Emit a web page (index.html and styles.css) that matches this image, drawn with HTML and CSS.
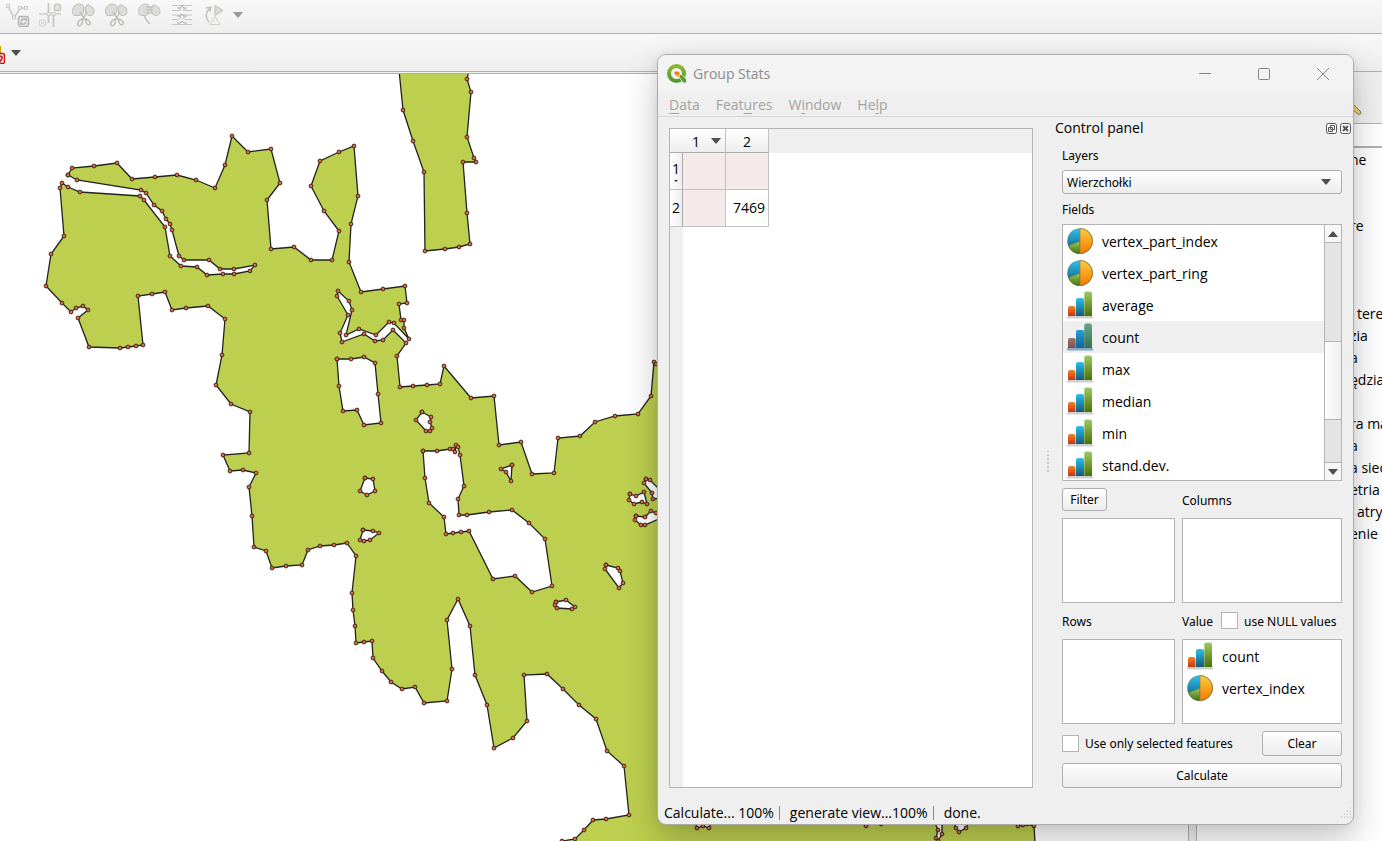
FILE: index.html
```html
<!DOCTYPE html>
<html lang="en">
<head>
<meta charset="utf-8">
<title>Group Stats</title>
<link rel="stylesheet" href="styles.css">
</head>
<body>
<svg class="defs" aria-hidden="true">
  <defs>
    <linearGradient id="gOrange" x1="0" y1="0" x2="0" y2="1"><stop offset="0" stop-color="#fccf3e"/><stop offset="1" stop-color="#f57900"/></linearGradient>
    <linearGradient id="gBlue" x1="0" y1="0" x2="0" y2="1"><stop offset="0" stop-color="#2fbfee"/><stop offset="1" stop-color="#0f5a7c"/></linearGradient>
    <linearGradient id="gPie" x1="0" y1="0" x2="0" y2="1"><stop offset="0" stop-color="#2fc2f0"/><stop offset=".7" stop-color="#16749c"/></linearGradient>
    <linearGradient id="gGreen" x1="0" y1="0" x2="0" y2="1"><stop offset="0" stop-color="#9aca60"/><stop offset="1" stop-color="#467208"/></linearGradient>
    <linearGradient id="gRed" x1="0" y1="0" x2="0" y2="1"><stop offset="0" stop-color="#f58220"/><stop offset="1" stop-color="#c23616"/></linearGradient>
    <linearGradient id="gQ" x1="0" y1="0" x2="0" y2="1"><stop offset="0" stop-color="#8fb52c"/><stop offset="1" stop-color="#4f9a2f"/></linearGradient>
    <symbol id="pie" viewBox="0 0 26 26">
      <circle cx="13" cy="13" r="12.6" fill="url(#gPie)"/>
      <path d="M13 13L1.3 17.4A12.6 12.6 0 0 0 13 25.6z" fill="url(#gGreen)" stroke="#3c7050" stroke-width=".6"/>
      <path d="M13 .4A12.6 12.6 0 0 1 13 25.6z" fill="url(#gOrange)" stroke="#a07840" stroke-width=".7"/>
      <circle cx="13" cy="13" r="12.5" fill="none" stroke="#7a6a30" stroke-opacity=".5" stroke-width=".7"/>
    </symbol>
    <symbol id="bars" viewBox="0 0 26 28">
      <rect x="0" y="25" width="26" height="2.6" rx="1" fill="#cfcfd2"/>
      <path d="M1 25V17q0-2 2-2h3.500q2 0 2 2v8z" fill="url(#gRed)"/>
      <path d="M9 25V9q0-2 2-2h4q2 0 2 2v16z" fill="url(#gBlue)"/>
      <path d="M17.300 25V2.500q0-2 2-2h3.700q2 0 2 2V25z" fill="url(#gGreen)"/>
    </symbol>
    <symbol id="bars-on" viewBox="0 0 26 28">
      <use href="#bars"/>
      <path d="M0 25h1V17q0-2 2-2h3.500q1.500 0 2.500 1V9q0-2 2-2h4q1.500 0 2.300 1V2.500q0-2 2-2h3.700q2 0 2 2V25h1v2.600H0z" fill="#1a70c0" fill-opacity=".4"/>
    </symbol>
    <symbol id="down" viewBox="0 0 10 6"><path d="M0 0h10L5.500 5.500h-1z" fill="currentColor"/></symbol>
    <marker id="vertex" viewBox="0 0 6 6" refX="3" refY="3" markerWidth="6" markerHeight="6" markerUnits="userSpaceOnUse"><circle cx="3" cy="3" r="1.900" fill="#ea6a40" stroke="#3a2a20" stroke-width="1"/></marker>
    <g id="petals"><path d="M0 8Q1 2 7 1q5 0 5 5 0 7-7 6.500Q0 13 0 8z"/><path d="M13 5q1-4 4-3l1 1q4 1 4 5 0 5-5 4.500-4-1-4-7.500z"/></g>
    <g id="blades"><path d="M8 9l5.500 8M15 9l-4.500 8M10.500 16q-4 1-5 5 1 3 3.500 1 2-2 1.500-6zM13.500 16q4 1 5 4-1 3-3.500 1-2-2-1.500-5z"/></g>
  </defs>
</svg>

<div class="app">
  <header class="toolbar toolbar-edit">
    <button class="tool" aria-label="Offset curve"><svg viewBox="0 0 24 24" fill="none" stroke="#c8c8c4"><path d="M2 3l6 12 6-10h7" stroke-width="1.500"/><g fill="#eee"><path d="M.5 1.500h3v3h-3zM6.500 13h3v3h-3zM12.500 3.500h3v3h-3zM18.500 3.500h3v3h-3z"/></g><rect x="12.500" y="13.500" width="10" height="10" rx="2" fill="#e8e8e8" stroke="#b4b4b4" stroke-width="1.400"/><path d="M15 18q2-3.500 5-1v-2M20 19q-2 4-5 1v2" stroke="#b4b4b4" stroke-width="1.500"/></svg></button>
    <button class="tool" aria-label="Split parts"><svg viewBox="0 0 24 24" fill="none" stroke="#c6c6c2"><path d="M9.500 0v20M14.500 10v14" stroke-width="1.800"/><path d="M0 11h22" stroke-width="1.300"/><g fill="#f4f4f4"><path d="M8 9.500h3v3H8zM13 9.500h3v3h-3z"/></g><rect x="15.500" y="1.500" width="6" height="6" rx="1" fill="#e4e4da" stroke-width="1.500"/><rect x=".5" y="17" width="6" height="6" rx="1" stroke="#d8ccc8"/><path d="M2 18.500l3 3m0-3l-3 3" stroke="#d8ccc8"/></svg></button>
    <button class="tool" aria-label="Split features"><svg viewBox="0 0 24 24" fill="none" stroke="#bdbdb8"><use href="#petals" fill="#dcdcd8"/><use href="#blades" stroke-width="1.400"/></svg></button>
    <button class="tool" aria-label="Split selected"><svg viewBox="0 0 24 24" fill="none" stroke="#bdbdb8"><use href="#petals" fill="#dcdcd8"/><use href="#blades" stroke-width="1.400"/></svg></button>
    <button class="tool" aria-label="Merge features"><svg viewBox="0 0 24 24" fill="none" stroke="#c4c4c0"><use href="#petals" fill="#dcdcd8"/><path d="M8 4h7M8 7h7M8 10h7" stroke="#b8b8b8"/><path d="M5 12q2 1 3 4t4 5" stroke="#bbb" stroke-width="1.300"/></svg></button>
    <button class="tool" aria-label="Merge attributes"><svg viewBox="0 0 24 24" fill="none" stroke="#c6c6c2"><path d="M1 2.500h20M1 7.500h7m6 0h7M1 12h20M1 16.500h7m6 0h7M1 21.500h20"/><path d="M6 5h3l2-2 2 2h3M6 13h3l2-2 2 2h3M6 20h3l2-2 2 2h3M9 5v3m4-3v3M9 13v3m4-3v3" stroke="#aaa"/></svg></button>
    <button class="tool" aria-label="Rotate symbols"><svg viewBox="0 0 24 24" fill="none" stroke="#bdbdb8"><path d="M5 19Q-1 12 6 5M2 5l5-1-1 5" stroke-width="1.300"/><path d="M11 2.500l8 5-8 5z" fill="#dcdcd8"/><path d="M11 13.500l5 8H6z" stroke="#d2ceca"/></svg></button>
    <button class="drop pale" aria-label="More"><svg class="arrow"><use href="#down"/></svg></button>
  </header>
  <header class="toolbar toolbar-label">
    <svg class="cut-icon" viewBox="0 0 6 20" aria-hidden="true"><path d="M0 2h1v7H0z" fill="#c9a100"/><rect x="-6" y="9.500" width="10.500" height="10" rx="2" fill="#f4dcdc" stroke="#c81414" stroke-width="1.300"/><path d="M0 12q4 1 1 4l-2 3" fill="none" stroke="#c81414" stroke-width="1.500"/></svg>
    <button class="drop" aria-label="More"><svg class="arrow"><use href="#down"/></svg></button>
  </header>
  <main class="body">
    <div class="map">
      <svg class="canvas" viewBox="0 74 1188 767" preserveAspectRatio="xMinYMin slice" role="img" aria-label="Map">
        <g class="shape">
          <path d="M399 70L403 110 413 141 424 172 425 251 445 249 459 247 470 244 467 213 463 162 476 162 474 158 467 137 471 92 467 79 469 70"/>
          <path d="M68 175L72 168 94 166 117 163 132 179 155 177 177 175 196 180 215 188 225 165 232 136 248 152 271 149 280 183 267 200 271 249 294 247 311 260 332 260 339 231 324 211 311 186 320 161 339 152 354 146 358 196 351 224 349 262 361 292 383 289 405 286 407 303 399 304 401 320 404 320 404 328 409 339 394 323 389 322 376 335 359 329 346 335 352 310 349 301 338 291 337 296 348 315 340 333 342 342 364 334 375 341 383 340 393 330 406 343 397 356 400 387 413 386 427 385 440 384 444 366 471 398 494 396 499 445 521 442 532 474 554 473 558 438 580 436 595 422 615 416 638 414 651 396 654 362 656 364 700 380 1000 800 1018 826 1023 825 1027 824 1034 826 1036 860 550 860 562 841 575 839 584 830 593 820 606 819 629 815 624 766 607 751 596 719 579 705 563 689 547 674 524 675 527 721 513 738 494 748 487 705 475 675 470 626 458 599 447 620 452 669 447 701 424 703 415 687 402 689 391 682 382 671 373 658 372 641 364 642 356 643 355 626 353 610 352 593 356 556 347 543 334 545 320 546 308 550 302 565 286 566 272 568 266 551 254 547 252 516 249 487 256 473 243 470 230 471 223 455 249 453 250 412 231 404 216 385 222 355 225 319 208 306 186 308 172 310 165 292 152 294 138 296 143 345 136 346 128 347 120 348 89 347 78 318 88 310 83 306 76 308 71 312 62 303 46 286 51 254 64 236 60 188 62 183 68 187 80 192 140 196 144 200 165 227 170 256 181 266 197 267 207 275 223 274 234 274 250 271 255 265 234 269 220 269 209 260 184 260 179 256 172 230 170 224 166 219 162 211 154 205 146 193 141 190 77 180z"/>
          <path d="M860 800L866 826 873 800 881 824 888 800z"/>
        </g>
        <g class="shape hole">
          <path d="M337 359L351 359 364 357 375 363 378 394 381 423 364 425 357 410 343 411 339 386z"/>
          <path d="M422 412L431 417 430 422 432 428 430 431 426 431 416 420z"/>
          <path d="M365 478L373 479 375 491 367 495 360 491z"/>
          <path d="M363 530L373 531 379 533 370 540 364 541 360 540z"/>
          <path d="M423 451L437 451 450 449 453 449 455 452 456 445 458 447 460 455 464 486 458 499 459 515 467 515 489 512 512 510 529 523 545 539 552 586 532 592 515 576 493 579 469 531 461 532 453 533 446 534 444 517 429 503 425 478z"/>
          <path d="M512 465L501 469 506 472 511 481z"/>
          <path d="M606 565L618 568 620 571 623 583 619 588 605 569z"/>
          <path d="M556 602L566 600 575 607 572 609 557 608 555 605z"/>
          <path d="M630 494L636 496 644 492 647 504 642 502 634 504 629 500z"/>
          <path d="M646 479L650 480 662 492 662 498 653 499 652 493 644 483z"/>
          <path d="M636 516L645 517 651 511 656 513 670 514 645 525 641 525 635 520z"/>
          <path d="M694 818L697 828 703 826 709 828 713 818z"/>
          <path d="M932 816L938 830 936 838 938 841 942 834 942 816z"/>
          <path d="M952 816L956 828 959 832 966 828 972 816z"/>
        </g>
      </svg>
    </div>
    <div class="splitter"></div>
    <aside class="side">
      <div class="side-tools"><svg class="pencil" viewBox="0 0 10 10" aria-hidden="true"><path d="M0 1.500L2 0l7 7-.5 2-2 .5L0 4z" fill="#ecd66e" stroke="#8c7c4c"/></svg></div>
      <input class="side-search" aria-label="Search">
      <ul class="tree">
        <li>ne</li><li></li><li></li><li>re</li><li></li><li></li><li></li>
        <li class="spaced">tere</li><li>zia</li><li>a</li><li>ędzia</li><li></li><li>ra ma</li><li>a</li><li>a siec</li><li>etria</li><li class="spaced">atry</li><li>enie</li>
      </ul>
    </aside>
  </main>
</div>

<section class="dialog" aria-label="Group Stats">
  <div class="titlebar">
    <svg class="logo" viewBox="0 0 20 20" aria-hidden="true"><circle cx="9.500" cy="9.500" r="7.500" fill="none" stroke="url(#gQ)" stroke-width="4"/><path d="M10.500 10.500h4.500l4.500 5V19h-3.500z" fill="#5a9e34" stroke="#f3f3f3" stroke-width=".8"/><path d="M7.500 7.500h3.500l2 2v3.500h-2l-3.500-3.500z" fill="#ee7913"/><path d="M11 10h2v3h-2l-1-1z" fill="#f6c21c"/></svg>
    <h1 class="title">Group Stats</h1>
    <button class="win" aria-label="Minimize"><svg viewBox="0 0 12 12"><path d="M0 5.500h12"/></svg></button>
    <button class="win" aria-label="Maximize"><svg viewBox="0 0 12 12"><rect x=".5" y=".5" width="11" height="11" rx="1"/></svg></button>
    <button class="win" aria-label="Close"><svg viewBox="0 0 12 12"><path d="M0 0l12 12M12 0L0 12"/></svg></button>
  </div>
  <nav class="menubar">
    <button><u>D</u>ata</button><button>Feat<u>u</u>res</button><button>W<u>i</u>ndow</button><button>He<u>l</u>p</button>
  </nav>
  <div class="panes">
    <div class="result">
      <table class="grid">
        <colgroup><col class="c-head"><col class="c-first"><col class="c-second"></colgroup>
        <thead><tr><th colspan="2" class="sorted"><span>1</span><svg class="arrow"><use href="#down"/></svg></th><th>2</th></tr></thead>
        <tbody>
          <tr><th>1<svg class="tick" viewBox="0 0 4 2"><path d="M0 0h4L2 2z" fill="#333"/></svg></th><td class="blank"></td><td class="blank"></td></tr>
          <tr><th>2</th><td class="blank"></td><td>7469</td></tr>
        </tbody>
      </table>
      <div class="strip"></div>
    </div>
    <div class="handle"></div>
    <div class="dock">
      <div class="dock-title">
        <h2>Control panel</h2>
        <button class="mini" aria-label="Float"><svg viewBox="0 0 11 11"><rect x=".5" y=".5" width="10" height="10" rx="2" fill="#fafafa"/><path d="M4.500 2.500h4v4h-4zM2.500 4.500h4v4h-4z" fill="#fafafa"/></svg></button>
        <button class="mini" aria-label="Close panel"><svg viewBox="0 0 11 11"><rect x=".5" y=".5" width="10" height="10" rx="2" fill="#fafafa"/><path d="M3 3l5 5M8 3L3 8" stroke-width="2"/></svg></button>
      </div>
      <form class="form">
        <label class="cap" for="layers">Layers</label>
        <div class="combo"><select id="layers"><option>Wierzchołki</option></select><svg class="arrow"><use href="#down"/></svg></div>
        <div class="cap">Fields</div>
        <div class="fields">
          <ul class="list">
            <li><svg><use href="#pie"/></svg><span>vertex_part_index</span></li>
            <li><svg><use href="#pie"/></svg><span>vertex_part_ring</span></li>
            <li><svg class="tall"><use href="#bars"/></svg><span>average</span></li>
            <li class="selected"><svg class="tall"><use href="#bars-on"/></svg><span>count</span></li>
            <li><svg class="tall"><use href="#bars"/></svg><span>max</span></li>
            <li><svg class="tall"><use href="#bars"/></svg><span>median</span></li>
            <li><svg class="tall"><use href="#bars"/></svg><span>min</span></li>
            <li><svg class="tall"><use href="#bars"/></svg><span>stand.dev.</span></li>
          </ul>
          <div class="scroll">
            <button type="button" class="up" aria-label="Scroll up"><svg class="arrow"><use href="#down"/></svg></button>
            <div class="track"><div class="thumb"></div></div>
            <button type="button" aria-label="Scroll down"><svg class="arrow"><use href="#down"/></svg></button>
          </div>
        </div>
        <div class="pair heads"><button type="button" class="btn filter">Filter</button><span class="cap">Columns</span></div>
        <div class="pair"><ul class="box"></ul><ul class="box"></ul></div>
        <div class="pair heads"><span class="cap">Rows</span><div class="value"><span class="cap">Value</span><input type="checkbox" id="nulls"><label for="nulls">use NULL values</label></div></div>
        <div class="pair"><ul class="box"></ul>
          <ul class="box list"><li><svg class="tall"><use href="#bars"/></svg><span>count</span></li><li><svg><use href="#pie"/></svg><span>vertex_index</span></li></ul></div>
        <div class="actions"><input type="checkbox" id="only"><label for="only">Use only selected features</label><button type="button" class="btn clear">Clear</button></div>
        <button type="button" class="btn">Calculate</button>
      </form>
    </div>
  </div>
  <footer class="status"><span>Calculate... 100%</span><i></i><span>generate view...100%</span><i></i><span>done.</span>
    <svg class="grip" viewBox="0 0 12 12" aria-hidden="true"><path d="M10 1h1M7 4h1m2 0h1M4 7h1m2 0h1m2 0h1M1 10h1m2 0h1m2 0h1m2 0h1" stroke="#b0b0b0"/></svg>
  </footer>
</section>
</body>
</html>
```
FILE: styles.css
```css
* { box-sizing: border-box; }
body { margin: 0; font: 14px/20px "Open Sans", "Noto Sans", sans-serif; color: #000; background: #f0f0f0; }
ul { list-style: none; margin: 0; padding: 0; }
h1, h2 { margin: 0; font-size: inherit; font-weight: 400; }
button { font: inherit; color: inherit; padding: 0; border: 0; background: none; }
svg { display: block; }
.defs { position: absolute; width: 0; height: 0; }
.arrow { width: 10px; height: 6px; color: #4f4f4f; }

.app { display: flex; flex-direction: column; height: 100vh; overflow: hidden; }
.toolbar { display: flex; align-items: center; flex: none; background: linear-gradient(#f8f8f8, #eeeeee); border-bottom: 1px solid #b0b0b0; }
.toolbar-edit { height: 34px; padding: 0 6px 4px; gap: 9px; }
.toolbar-label { height: 38px; gap: 5px; }
.tool, .tool svg { width: 24px; height: 24px; }
.pale { margin-left: -4px; }
.pale .arrow { color: #9a9a9a; }
.cut-icon { width: 6px; height: 20px; margin-top: 3px; }
.body { display: flex; flex: 1; min-height: 0; }
.map { flex: 1; min-width: 0; margin-top: 1px; border-top: 1px solid #b0b0b0; background: #fff; overflow: hidden; }
.canvas { width: 1188px; height: 767px; }
.shape path { fill: #bdcf4e; stroke: #222; stroke-width: 1.3px; marker-start: url(#vertex); marker-mid: url(#vertex); marker-end: url(#vertex); }
.hole path { fill: #fff; }
.splitter { flex: none; width: 9px; border: solid #b0b0b0; border-width: 0 1px; }
.side { display: flex; flex-direction: column; flex: none; width: 185px; overflow: hidden; }
.side-tools { height: 51px; padding: 33px 0 0 155px; }
.pencil { width: 10px; height: 10px; }
.side-search { width: 100%; height: 24px; border: 1px solid #b0b0b0; border-width: 1px 0; background: #fff; }
.tree { flex: 1; padding: 1px 0 0 153px; background: #fff; border-top: 1px solid #b0b0b0; white-space: nowrap; }
.tree li { height: 22px; line-height: 22px; }
.tree .spaced { padding-left: 7px; }

.dialog { position: absolute; left: 657px; top: 54px; width: 697px; height: 771px; display: flex; flex-direction: column; border: 1px solid #ababab; border-radius: 9px; background: #efefef; overflow: hidden; box-shadow: 0 14px 34px rgba(0, 0, 0, .24), 0 0 10px rgba(0, 0, 0, .06); }
.titlebar { display: flex; align-items: center; flex: none; height: 37px; padding: 0 24px 0 9px; background: #f3f3f3; color: #8c8c8c; }
.logo { width: 20px; height: 20px; }
.title { flex: 1; padding-left: 6px; }
.win { width: 12px; height: 12px; margin-left: 47px; }
.win svg { fill: none; stroke: #858585; overflow: visible; }
.menubar { display: flex; flex: none; gap: 16px; height: 25px; padding: 1px 11px 0; border-bottom: 1px solid #d6d6d6; color: #a3a3a3; }
.menubar u { text-underline-offset: 3px; }
.panes { display: flex; flex: 1; min-height: 0; }
.result { display: flex; flex-direction: column; flex: 1; margin: 11px 0 6px 11px; border: 1px solid #b4b4b4; background: linear-gradient(#efefef, #efefef) 0 0 / 100% 24px no-repeat #fff; }
.strip { flex: 1; width: 13px; background: #efefef; }
.grid { border-collapse: separate; border-spacing: 0; table-layout: fixed; width: 99px; }
.c-head { width: 13px; }
.c-first, .c-second { width: 43px; }
.grid th, .grid td { padding: 0; font-weight: 400; border: solid #c2c2c2; border-width: 0 1px 1px 0; }
.grid thead th { height: 24px; padding-top: 2px; background: linear-gradient(#fff, #eee); border-bottom-color: #ababab; }
.grid .sorted { padding-left: 22px; }
.sorted span { float: left; }
.sorted .arrow { float: right; margin: 6px 4px 0 0; }
.grid tbody th { height: 37px; line-height: 18px; background: linear-gradient(90deg, #fff, #eee); border-right-color: #ababab; }
.tick { width: 4px; height: 2px; margin: 2px auto 0; }
.grid td { text-align: right; padding-right: 3px; background: #fff; }
.grid .blank { background: #f5eaea; }
.handle { width: 22px; background: radial-gradient(circle, #c4c4c4 1px, transparent 1px) 13px 0 / 4px 4px repeat-y; background-clip: content-box; padding: 334px 0 320px; }
.dock { width: 298px; display: flex; flex-direction: column; }
.dock-title { display: flex; align-items: center; height: 22px; padding-right: 2px; gap: 3px; }
.dock-title h2 { flex: 1; }
.mini, .mini svg { width: 11px; height: 11px; }
.mini svg { fill: none; stroke: #555; }
.form { display: flex; flex-direction: column; gap: 7px; padding: 8px 11px 0 7px; font: 12px/17px "Noto Sans", "Open Sans", sans-serif; }
.form > .cap { height: 17px; }
.form > .cap + div { margin-top: -1px; }
.combo { display: grid; align-items: center; }
.combo > * { grid-area: 1 / 1; }
.combo select { height: 24px; padding: 0 4px; font: inherit; appearance: none; }
.combo .arrow { justify-self: end; margin-right: 11px; pointer-events: none; }
.combo select, .btn { color: #000; border: 1px solid #adadad; border-radius: 3px; background: linear-gradient(#fefefe, #ededed); }
.btn { height: 25px; }
.fields { display: flex; height: 257px; border: 1px solid #b4b4b4; background: #fff; overflow: hidden; }
.list { flex: 1; font: 14px/20px "Open Sans", "Noto Sans", sans-serif; }
.list li { display: flex; align-items: center; gap: 9px; height: 32px; padding-left: 4px; }
.list span { padding-top: 2px; }
.list svg { width: 26px; height: 26px; }
.list .tall { height: 28px; }
.list .selected { background: #efefef; }
.scroll { display: flex; flex-direction: column; width: 17px; border-left: 1px solid #b4b4b4; }
.scroll button { display: grid; place-items: center; height: 17px; background: #f7f7f7; }
.up .arrow { transform: rotate(180deg); }
.track { flex: 1; padding-top: 98px; background: #e4e4e4; border: solid #b4b4b4; border-width: 1px 0; }
.thumb { height: 79px; border: solid #b4b4b4; border-width: 1px 0; background: linear-gradient(90deg, #fefefe, #efefef); }
.pair { display: grid; grid-template-columns: 113px 1fr; gap: 7px; }
.heads { align-items: center; height: 23px; }
.heads .cap, .heads label { padding-top: 1px; }
.filter { width: 45px; height: 23px; }
.box { height: 85px; border: 1px solid #b4b4b4; background: #fff; overflow: hidden; }
.pair + .heads { margin-top: -1px; }
.value { display: flex; align-items: center; }
.value input { margin: 0 6px 0 8px; }
input[type="checkbox"] { appearance: none; flex: none; width: 17px; height: 17px; border: 1px solid #b4b4b4; background: #fff; }
.actions { display: flex; align-items: center; height: 25px; }
.actions input { margin: 0 6px 0 0; }
.clear { width: 80px; margin-left: auto; }
.status { display: flex; align-items: center; flex: none; height: 30px; padding: 7px 1px 0 6px; }
.status i { width: 1px; height: 14px; margin: 0 10px 0 5px; background: #a08468; }
.grip { width: 12px; height: 12px; margin-left: auto; }
```
